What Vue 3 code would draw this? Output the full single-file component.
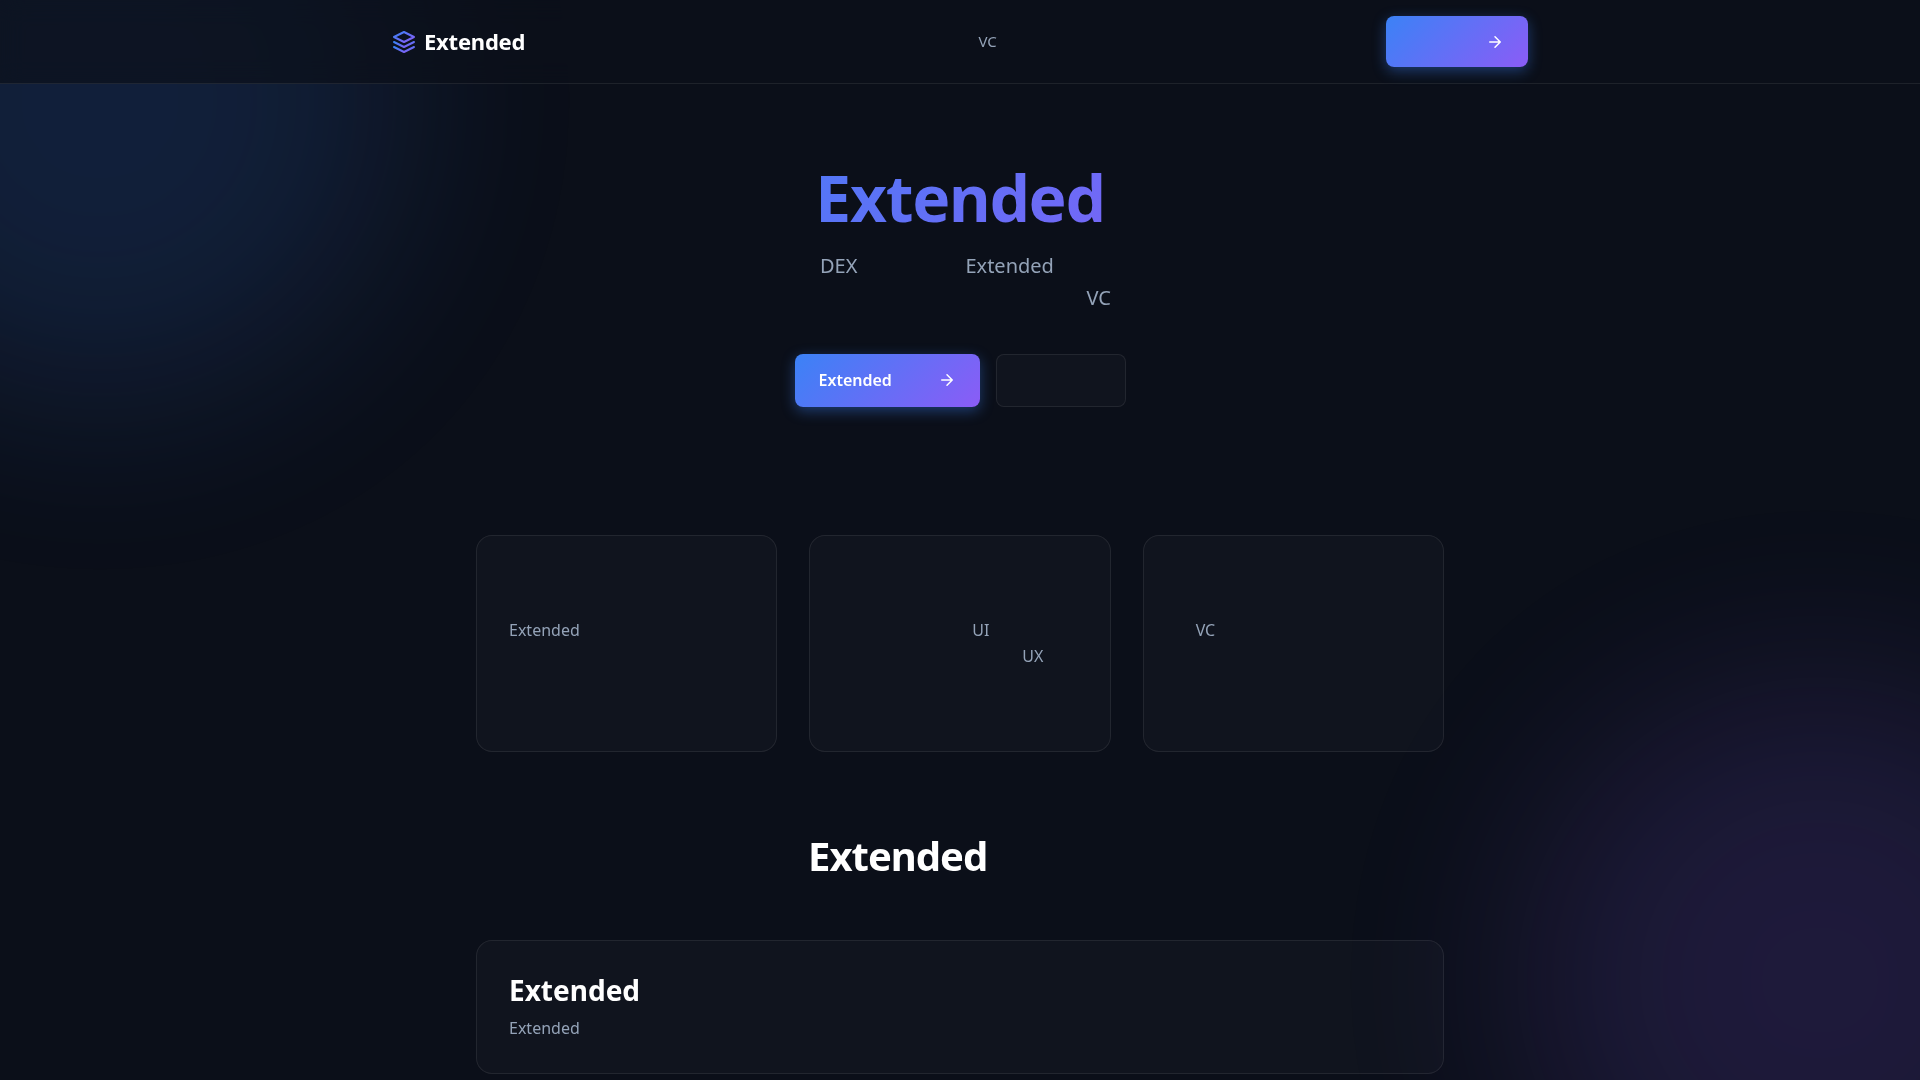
<script setup>
const features = [
  { id: 'extended', lines: ['Extended'] },
  { id: 'design', lines: ['UI', 'UX'] },
  { id: 'funding', lines: ['VC'] },
]
</script>
<template>
  <div class="page">
    <div class="glow glow-blue"></div>
    <div class="glow glow-purple"></div>
    <header>
      <div class="header-inner">
        <a href="#" class="logo">
          <svg width="24" height="24" viewBox="0 0 24 24" fill="none" aria-hidden="true">
            <defs>
              <linearGradient id="logo-gradient" x1="0%" y1="0%" x2="100%" y2="100%">
                <stop offset="0%" stop-color="#3b82f6" />
                <stop offset="100%" stop-color="#8b5cf6" />
              </linearGradient>
            </defs>
            <g stroke-width="2" stroke-linecap="round" stroke-linejoin="round">
              <path stroke="url(#logo-gradient)" d="M12 2L2 7L12 12L22 7L12 2Z" />
              <path stroke="url(#logo-gradient)" d="M2 17L12 22L22 17" />
              <path stroke="url(#logo-gradient)" d="M2 12L12 17L22 12" />
            </g>
          </svg>
          <span>Extended</span>
        </a>
        <nav>
          <a href="#funding">VC</a>
        </nav>
        <a href="#start" class="btn btn-primary btn-nav" aria-label="Extended">
          <svg class="arrow" viewBox="0 0 24 24" aria-hidden="true">
            <path d="M5 12h14M12 5l7 7-7 7" />
          </svg>
        </a>
      </div>
    </header>
    <main>
      <section class="hero">
        <h1>Extended</h1>
        <p class="lead">
          <span class="lead-line"><span>DEX</span><span>Extended</span></span>
          <span class="lead-line lead-end">VC</span>
        </p>
        <div class="actions">
          <button type="button" class="btn btn-primary btn-hero">
            <span>Extended</span>
            <svg class="arrow" viewBox="0 0 24 24" aria-hidden="true">
              <path d="M5 12h14M12 5l7 7-7 7" />
            </svg>
          </button>
          <button type="button" class="btn btn-secondary" aria-label="VC"></button>
        </div>
      </section>
      <section class="features">
        <article v-for="item in features" :key="item.id" class="card" :class="item.id">
          <p v-for="line in item.lines" :key="line">{{ line }}</p>
        </article>
      </section>
      <section id="funding" class="projects">
        <h2>Extended</h2>
        <article class="card project">
          <h3>Extended</h3>
          <p>Extended</p>
        </article>
      </section>
    </main>
  </div>
</template>
<style>
body {
  background: #0b0f19;
  overflow-x: hidden;
}
</style>
<style scoped>
.page {
  min-height: 100vh;
  font-family: 'Noto Sans', sans-serif;
  font-size: 16px;
  line-height: 26px;
  color: #fff;
}
.page * {
  box-sizing: border-box;
}
h1,
h2,
h3,
p {
  margin: 0;
}
a {
  color: inherit;
  text-decoration: none;
}
.glow {
  position: fixed;
  width: 600px;
  height: 600px;
  border-radius: 50%;
  filter: blur(100px);
  opacity: 0.15;
  pointer-events: none;
}
.glow-blue {
  top: -200px;
  left: -200px;
  background: #3b82f6;
}
.glow-purple {
  right: -200px;
  bottom: -200px;
  background: #8b5cf6;
}
header {
  position: sticky;
  top: 0;
  z-index: 10;
  background: rgba(11, 15, 25, 0.7);
  backdrop-filter: blur(12px);
  border-bottom: 1px solid rgba(255, 255, 255, 0.08);
}
.header-inner {
  display: flex;
  align-items: center;
  justify-content: space-between;
  max-width: 1200px;
  margin: 0 auto;
  padding: 16px 32px;
}
.logo {
  display: flex;
  align-items: center;
  gap: 8px;
  font-size: 22px;
  font-weight: 700;
  line-height: 25px;
  letter-spacing: -0.01em;
}
nav {
  display: flex;
  padding-left: 64px;
  font-size: 15px;
  line-height: 25px;
  color: #94a3b8;
}
.btn {
  display: inline-flex;
  align-items: center;
  justify-content: space-between;
  padding: 14px 24px 15px;
  border: 0;
  border-radius: 8px;
  font-family: inherit;
  font-size: 16px;
  font-weight: 600;
  line-height: 24px;
  color: #fff;
  cursor: pointer;
}
.btn-primary {
  background: linear-gradient(135deg, #3b82f6, #8b5cf6);
  box-shadow: 0 4px 14px rgba(59, 130, 246, 0.4);
}
.btn-nav {
  justify-content: flex-end;
  width: 142px;
  height: 51px;
  padding: 14px 24px;
}
.btn-hero {
  width: 185px;
}
.btn-secondary {
  width: 130px;
  background: rgba(255, 255, 255, 0.025);
  border: 1px solid rgba(255, 255, 255, 0.08);
}
.arrow {
  width: 18px;
  height: 18px;
  fill: none;
  stroke: currentColor;
  stroke-width: 2;
  stroke-linecap: round;
  stroke-linejoin: round;
}
main {
  position: relative;
  max-width: 1000px;
  margin: 0 auto;
  padding: 0 16px;
}
.hero {
  display: flex;
  flex-direction: column;
  align-items: center;
  padding: 80px 0 128px;
}
h1 {
  width: 800px;
  max-width: 100%;
  margin-bottom: 18px;
  font-size: 64px;
  font-weight: 700;
  line-height: 68px;
  text-align: center;
  letter-spacing: -0.02em;
  background: linear-gradient(135deg, #3b82f6, #8b5cf6);
  background-clip: text;
  color: transparent;
}
.lead {
  width: 302px;
  margin-bottom: 40px;
  padding-left: 11px;
  font-size: 20px;
  line-height: 32px;
  color: #94a3b8;
}
.lead-line {
  display: flex;
  gap: 108px;
}
.lead-end {
  justify-content: flex-end;
}
.actions {
  display: flex;
  gap: 16px;
}
.features {
  display: grid;
  grid-template-columns: repeat(3, 1fr);
  gap: 32px;
}
.card {
  padding: 32px;
  background: rgba(255, 255, 255, 0.025);
  border: 1px solid rgba(255, 255, 255, 0.08);
  border-radius: 16px;
}
.card p {
  color: #94a3b8;
}
.features .card {
  min-height: 217px;
  padding-top: 81px;
}
.design p {
  padding-left: 130px;
}
.design p + p {
  padding-left: 180px;
}
.funding p {
  padding-left: 20px;
}
h2 {
  padding: 80px 0 60px 332px;
  font-size: 40px;
  font-weight: 700;
  line-height: 48px;
  letter-spacing: -1px;
}
h3 {
  margin-bottom: 8px;
  font-size: 28px;
  font-weight: 700;
  line-height: 34px;
}
</style>
